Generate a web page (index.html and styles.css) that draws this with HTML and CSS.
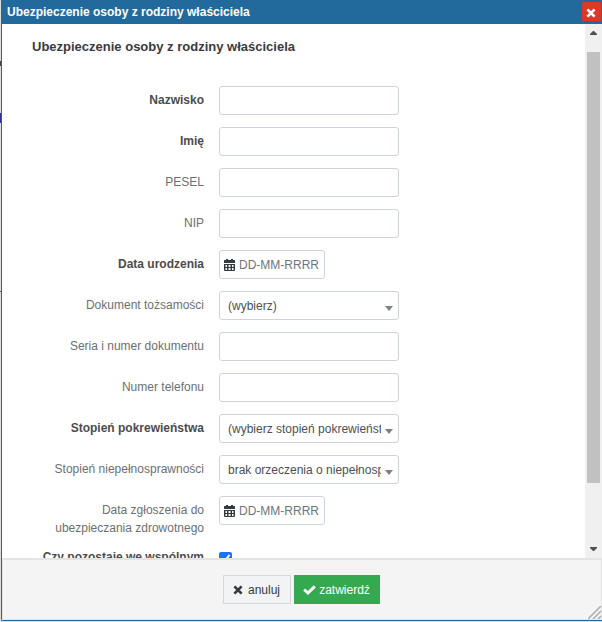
FILE: index.html
```
<!DOCTYPE html>
<html lang="pl">
<head>
<meta charset="utf-8">
<title>Ubezpieczenie osoby z rodziny właściciela</title>
<link rel="stylesheet" href="styles.css">
</head>
<body>
<svg width="0" height="0" class="defs">
  <symbol id="calendar" viewBox="0 0 11 12"><path fill="currentColor" fill-rule="evenodd" d="M2 0h2v1h3V0h2v1h1.500a.5.5 0 0 1 .5.500V4H0V1.500A.5.500 0 0 1 .5 1H2zM0 5h11v6a1 1 0 0 1-1 1H1a1 1 0 0 1-1-1zM1.500 6v2H3V6zm3 0v2h2V6zM8 6v2h1.500V6zM1.500 9v2H3V9zm3 0v2h2V9zM8 9v2h1.500V9z"/></symbol>
  <symbol id="cross" viewBox="0 0 10 10"><path d="M1.400 1.400 8.600 8.600M8.600 1.400 1.400 8.600" stroke="currentColor" stroke-width="2.700"/></symbol>
  <symbol id="check" viewBox="0 0 13 10"><path d="M1.200 4.500 4.900 8 11.800 1.400" fill="none" stroke="currentColor" stroke-width="3"/></symbol>
</svg>
<div class="page">
  <div class="dialog">
    <header class="titlebar">
      <span>Ubezpieczenie osoby z rodziny właściciela</span>
      <button class="close" aria-label="Zamknij"><svg width="10" height="10"><use href="#cross"/></svg></button>
    </header>
    <div class="content">
      <form class="form">
        <h1>Ubezpieczenie osoby z rodziny właściciela</h1>
        <div class="row"><label class="required">Nazwisko</label><div class="field"></div></div>
        <div class="row"><label class="required">Imię</label><div class="field"></div></div>
        <div class="row"><label>PESEL</label><div class="field"></div></div>
        <div class="row"><label>NIP</label><div class="field"></div></div>
        <div class="row"><label class="required">Data urodzenia</label><div class="field date"><svg width="11" height="12"><use href="#calendar"/></svg><span>DD-MM-RRRR</span></div></div>
        <div class="row"><label>Dokument tożsamości</label><div class="field select"><span>(wybierz)</span><i class="caret"></i></div></div>
        <div class="row"><label>Seria i numer dokumentu</label><div class="field"></div></div>
        <div class="row"><label>Numer telefonu</label><div class="field"></div></div>
        <div class="row"><label class="required">Stopień pokrewieństwa</label><div class="field select"><span>(wybierz stopień pokrewieństwa)</span><i class="caret"></i></div></div>
        <div class="row"><label>Stopień niepełnosprawności</label><div class="field select"><span>brak orzeczenia o niepełnosprawności</span><i class="caret"></i></div></div>
        <div class="row"><label>Data zgłoszenia do<br>ubezpieczania zdrowotnego</label><div class="field date"><svg width="11" height="12"><use href="#calendar"/></svg><span>DD-MM-RRRR</span></div></div>
        <div class="row check-row"><label class="required">Czy pozostaje we wspólnym</label><div class="checkbox"><svg width="13" height="13" viewBox="0 0 13 13"><path d="M2.700 6.800 5.300 9.400 10.600 2.900" fill="none" stroke="#fff" stroke-width="2"/></svg></div></div>
      </form>
      <div class="scrollbar">
        <svg width="17" height="17"><path d="M5 11h7v-1L9 7H8L5 10z" fill="#505050"/></svg>
        <div class="track"><div class="thumb"></div></div>
        <svg width="17" height="17"><path d="M5 6h7v1L9 10H8L5 7z" fill="#505050"/></svg>
      </div>
    </div>
    <footer class="footer">
      <button class="button"><svg width="10" height="10"><use href="#cross"/></svg>anuluj</button>
      <button class="button confirm"><svg width="13" height="10"><use href="#check"/></svg>zatwierdź</button>
      <svg class="grip" width="13" height="13"><path d="M0 13 13 0M5 13 13 5M10 13 13 10" stroke="#aaa" stroke-width="1.500"/></svg>
    </footer>
  </div>
</div>
</body>
</html>
```
FILE: styles.css
```
* { box-sizing: border-box; }
body { margin: 0; font: 12px/18px "Liberation Sans", Arial, sans-serif; color: #343a40; }
.defs { position: absolute; }
.page {
  height: 622px;
  padding-left: 1px;
  overflow: hidden;
  background:
    linear-gradient(#444, #444) 0 61px / 1px 5px no-repeat,
    linear-gradient(#2e3192, #2e3192) 0 113px / 1px 10px no-repeat,
    linear-gradient(#555, #555) 0 291px / 1px 1px no-repeat,
    #dcdcdc;
}
.dialog {
  display: flex;
  flex-direction: column;
  height: 621px;
  border-left: 1px solid #226a9b;
  border-bottom: 1px solid #226a9b;
  border-bottom-left-radius: 2px;
  background: #fff;
}
.titlebar {
  display: flex;
  justify-content: space-between;
  flex: none;
  height: 24px;
  margin-left: -1px;
  padding: 2px 1px 0 6px;
  background: #226a9b;
  color: #fff;
  font-weight: bold;
  line-height: 20px;
}
.close {
  display: flex;
  align-items: center;
  justify-content: center;
  width: 19px;
  height: 19px;
  padding: 2px 1px 0 0;
  border: 0;
  border-radius: 1px;
  background: #dc3727;
  color: #fff;
}
.content { display: flex; height: 534px; overflow: hidden; }
.form { flex: 1; padding-left: 30px; }
h1 { height: 62px; margin: 0; padding-top: 13px; font-size: 13px; line-height: 20px; color: #3a3a40; }
.row { display: flex; gap: 15px; align-items: flex-start; margin-bottom: 12px; }
label { width: 172px; padding-top: 5px; text-align: right; color: #6c6f73; white-space: nowrap; }
.required { font-weight: bold; color: #4b4b4d; }
.check-row { margin-top: -13px; padding-top: 0; }
.check-row label { padding-top: 0; margin-top: 12px; }
.field {
  display: flex;
  align-items: center;
  width: 180px;
  height: 29px;
  border: 1px solid #ced4da;
  border-radius: 3px;
  background: #fff;
}
.date { gap: 4px; width: 106px; padding-left: 4px; color: #343a40; }
.date span { color: #6c757d; }
.date svg { flex: none; }
.select { padding: 0 4px 0 9px; }
.select span { width: 153px; margin-left: -1px; overflow: hidden; white-space: nowrap; color: #495057; }
.caret { margin: 5px 0 0 4px; border: 4px solid transparent; border-top: 5px solid #808080; border-bottom: 0; }
.checkbox { width: 13px; height: 13px; margin-top: 16px; border-radius: 2px; background: #1a73f8; }
.checkbox svg { display: block; }
.scrollbar { display: flex; flex-direction: column; width: 17px; background: #f0f0f0; }
.scrollbar svg { flex: none; }
.track { flex: 1; padding: 11px 2px 0; }
.thumb { height: 431px; background: #c1c1c1; }
.footer {
  position: relative;
  display: flex;
  flex: 1;
  justify-content: center;
  align-items: flex-start;
  gap: 3px;
  padding: 15px 2px 0 0;
  border: 1px solid #e4e4e4;
  border-top-width: 2px;
  background: #f4f4f4;
}
.button {
  display: flex;
  align-items: center;
  justify-content: center;
  gap: 5px;
  width: 68px;
  height: 29px;
  padding: 0;
  border: 1px solid #d5d8dc;
  background: #f1f3f5;
  color: #343a40;
  font: inherit;
}
.confirm { gap: 3px; width: 86px; border-color: #34a94f; background: #34a94f; color: #fff; }
.grip { position: absolute; right: 0; bottom: 0; }
```
